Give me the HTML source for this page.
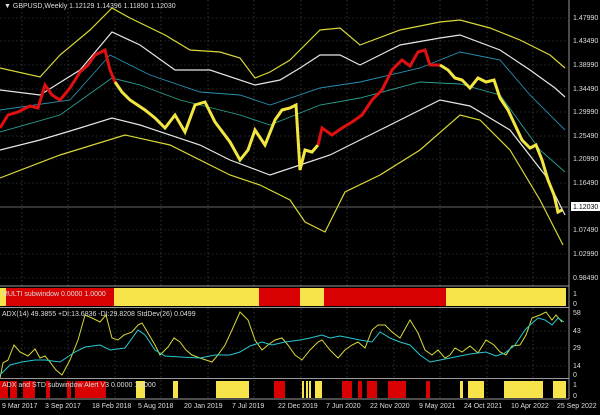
<!DOCTYPE html><html><head><style>
body{margin:0;background:#000;width:600px;height:410px;overflow:hidden;font-family:"Liberation Sans",sans-serif}
svg text{font-family:"Liberation Sans",sans-serif;font-size:7px;fill:#ddd}
</style></head><body>
<svg width="600" height="410" xmlns="http://www.w3.org/2000/svg">
<rect width="600" height="410" fill="#000"/>
<g stroke="#555" stroke-width="0.6" stroke-dasharray="1.5,2.5">
<line x1="22" y1="0" x2="22" y2="398"/><line x1="68" y1="0" x2="68" y2="398"/><line x1="115" y1="0" x2="115" y2="398"/><line x1="161" y1="0" x2="161" y2="398"/><line x1="208" y1="0" x2="208" y2="398"/><line x1="254" y1="0" x2="254" y2="398"/><line x1="301" y1="0" x2="301" y2="398"/><line x1="347" y1="0" x2="347" y2="398"/><line x1="394" y1="0" x2="394" y2="398"/><line x1="440" y1="0" x2="440" y2="398"/><line x1="487" y1="0" x2="487" y2="398"/><line x1="533" y1="0" x2="533" y2="398"/>
<line x1="0" y1="18" x2="568" y2="18"/><line x1="0" y1="41" x2="568" y2="41"/><line x1="0" y1="65" x2="568" y2="65"/><line x1="0" y1="89" x2="568" y2="89"/><line x1="0" y1="112" x2="568" y2="112"/><line x1="0" y1="136" x2="568" y2="136"/><line x1="0" y1="159" x2="568" y2="159"/><line x1="0" y1="183" x2="568" y2="183"/><line x1="0" y1="230" x2="568" y2="230"/><line x1="0" y1="254" x2="568" y2="254"/><line x1="0" y1="278" x2="568" y2="278"/>
<line x1="0" y1="331" x2="568" y2="331"/><line x1="0" y1="348" x2="568" y2="348"/><line x1="0" y1="366" x2="568" y2="366"/>
</g>
<line x1="0" y1="207" x2="568" y2="207" stroke="#888" stroke-width="0.7"/>
<g fill="none" stroke-width="1.2">
<polyline stroke="#d8d838" points="0,68 40,77 60,55 90,30 112,8 130,18 165,35 190,50 220,52 240,58 255,78 270,72 290,60 320,30 340,28 360,45 400,30 440,22 460,20 490,28 520,40 550,55 565,68"/>
<polyline stroke="#e6e6e6" points="0,90 40,95 80,70 112,32 140,45 175,70 210,70 255,85 280,80 300,68 320,55 340,55 360,65 400,45 440,38 460,35 500,50 530,70 555,88 565,97"/>
<polyline stroke="#2a8fb0" stroke-width="0.9" points="0,110 70,100 110,55 150,75 200,92 240,95 270,105 320,88 360,82 420,68 460,52 500,60 530,95 565,130"/>
<polyline stroke="#2aa090" stroke-width="0.9" points="0,132 60,115 112,78 140,85 180,100 240,115 270,125 320,105 360,98 420,82 460,84 500,95 540,150 565,172"/>
<polyline stroke="#e6e6e6" points="0,150 40,140 80,128 112,118 140,125 200,145 230,160 270,175 300,165 330,155 360,140 390,125 440,100 470,106 510,130 545,175 565,215"/>
<polyline stroke="#d8d838" points="0,178 60,155 125,135 170,145 230,175 260,185 290,200 305,222 325,232 345,192 380,175 420,150 460,115 480,120 510,150 540,200 563,245"/>
<polyline stroke="#e01010" stroke-width="3" points="0,128 8,115 18,112 30,106 38,108 45,85 52,95 60,100 70,88 80,72 88,65 95,55 105,50 110,70 115,82"/>
<polyline stroke="#f2e640" stroke-width="3" points="115,82 122,92 130,100 145,110 155,118 165,128 175,115 185,132 195,105 205,102 215,122 230,142 240,160 248,150 255,130 265,145 275,120 282,110 290,108 296,105 300,170 305,150 312,152 318,145"/>
<polyline stroke="#e01010" stroke-width="3" points="318,145 322,128 332,135 342,128 352,122 362,115 372,100 382,90 392,70 402,60 410,66 418,52 425,50 430,65 440,65"/>
<polyline stroke="#f2e640" stroke-width="3" points="440,65 448,70 455,78 462,80 470,88 478,78 486,82 494,80 500,98 508,110 515,125 522,140 530,148 536,145 542,160 548,180 554,195 558,212 562,210"/>
</g>
<text x="4" y="8" font-size="7">▼ GBPUSD,Weekly  1.12129 1.14396 1.11850 1.12030</text>
<line x1="569" y1="0" x2="569" y2="399" stroke="#bbb" stroke-width="0.8"/>
<g font-size="6.5">
<text x="573" y="20">1.47990</text><text x="573" y="43">1.43490</text><text x="573" y="67">1.38990</text><text x="573" y="91">1.34490</text><text x="573" y="114">1.29990</text><text x="573" y="138">1.25490</text><text x="573" y="161">1.20990</text><text x="573" y="185">1.16490</text><text x="573" y="232">1.07490</text><text x="573" y="256">1.02990</text><text x="573" y="280">0.98490</text>
</g>
<rect x="571" y="202" width="29" height="9" fill="#fff"/><text x="573" y="209" style="fill:#000" font-size="6.5">1.12030</text>
<line x1="0" y1="286" x2="569" y2="286" stroke="#999"/>
<rect x="0" y="288" width="566" height="18" fill="#f7e34a"/>
<rect x="6" y="288" width="108" height="18" fill="#d80000"/>
<rect x="259" y="288" width="41" height="18" fill="#d80000"/>
<rect x="324" y="288" width="122" height="18" fill="#d80000"/>
<text x="2" y="296" font-size="6.5">MULTI subwindow 0.0000 1.0000</text>
<text x="573" y="296">1</text><text x="573" y="306">0</text>
<line x1="0" y1="307.5" x2="569" y2="307.5" stroke="#999"/>
<g fill="none" stroke-width="1">
<polyline stroke="#d8d838" points="0,378 3,363 8,360 14,345 20,352 28,356 35,349 40,358 45,356 50,362 56,370 62,375 70,360 78,340 85,315 92,318 100,322 106,315 112,338 118,340 124,335 132,332 138,325 142,323 148,333 155,345 160,355 168,347 174,338 180,342 186,350 192,355 200,358 206,360 212,362 218,355 225,345 232,330 240,312 248,320 255,340 262,350 268,345 275,340 282,338 288,345 295,355 302,360 310,350 318,342 322,340 330,350 338,358 345,350 352,345 358,342 365,348 372,330 378,325 385,325 392,332 400,338 410,320 418,333 425,350 432,355 438,350 445,358 450,355 455,348 462,352 470,346 478,353 486,340 494,345 500,352 506,355 512,346 520,345 526,335 532,318 540,315 546,312 552,320 556,315 562,322"/>
<polyline stroke="#28c8d0" points="0,375 10,365 22,362 35,360 45,360 60,362 75,352 85,347 100,345 110,350 125,348 138,330 145,335 155,350 165,356 180,357 200,358 215,355 230,355 240,352 250,346 262,342 272,345 285,342 300,340 310,338 322,335 330,338 340,336 350,338 360,340 372,342 380,332 390,338 400,342 410,345 420,355 430,362 440,360 455,357 470,354 486,352 496,356 505,353 515,345 525,330 530,325 538,318 545,320 552,325 558,318 564,322"/>
</g>
<text x="2" y="316" font-size="6.5">ADX(14) 49.3855 +DI:13.6836 -DI:29.8208  StdDev(26) 0.0499</text>
<text x="573" y="315">58</text><text x="573" y="333">43</text><text x="573" y="350">29</text><text x="573" y="368">14</text><text x="573" y="377">0</text>
<line x1="0" y1="378.5" x2="569" y2="378.5" stroke="#999"/>
<g fill="#d80000">
<rect x="0" y="381" width="8" height="17"/><rect x="10" y="381" width="7" height="17"/><rect x="23" y="381" width="12" height="17"/><rect x="46" y="381" width="4" height="17"/><rect x="67" y="381" width="4" height="17"/><rect x="75" y="381" width="31" height="17"/>
<rect x="274" y="381" width="11" height="17"/><rect x="342" y="381" width="10" height="17"/><rect x="358" y="381" width="4" height="17"/><rect x="367" y="381" width="10" height="17"/><rect x="388" y="381" width="18" height="17"/><rect x="426" y="381" width="4" height="17"/>
</g>
<g fill="#f7e34a">
<rect x="136" y="381" width="9" height="17"/><rect x="173" y="381" width="5" height="17"/><rect x="216" y="381" width="33" height="17"/><rect x="302" y="381" width="2" height="17"/><rect x="306" y="381" width="2" height="17"/><rect x="309" y="381" width="2" height="17"/><rect x="315" y="381" width="7" height="17"/>
<rect x="460" y="381" width="3" height="17"/><rect x="468" y="381" width="16" height="17"/><rect x="504" y="381" width="39" height="17"/><rect x="553" y="381" width="13" height="17"/>
</g>
<text x="2" y="387" font-size="6.5">ADX and STD subwindow Alert V3 0.0000 1.0000</text>
<text x="573" y="387">1</text><text x="573" y="398">0</text>
<line x1="0" y1="399" x2="569" y2="399" stroke="#999"/>
<g font-size="6.5">
<text x="2" y="408">9 Mar 2017</text><text x="45" y="408">3 Sep 2017</text><text x="92" y="408">18 Feb 2018</text><text x="138" y="408">5 Aug 2018</text><text x="184" y="408">20 Jan 2019</text><text x="232" y="408">7 Jul 2019</text><text x="278" y="408">22 Dec 2019</text><text x="326" y="408">7 Jun 2020</text><text x="370" y="408">22 Nov 2020</text><text x="419" y="408">9 May 2021</text><text x="464" y="408">24 Oct 2021</text><text x="511" y="408">10 Apr 2022</text><text x="557" y="408">25 Sep 2022</text>
</g>
</svg>
</body></html>
